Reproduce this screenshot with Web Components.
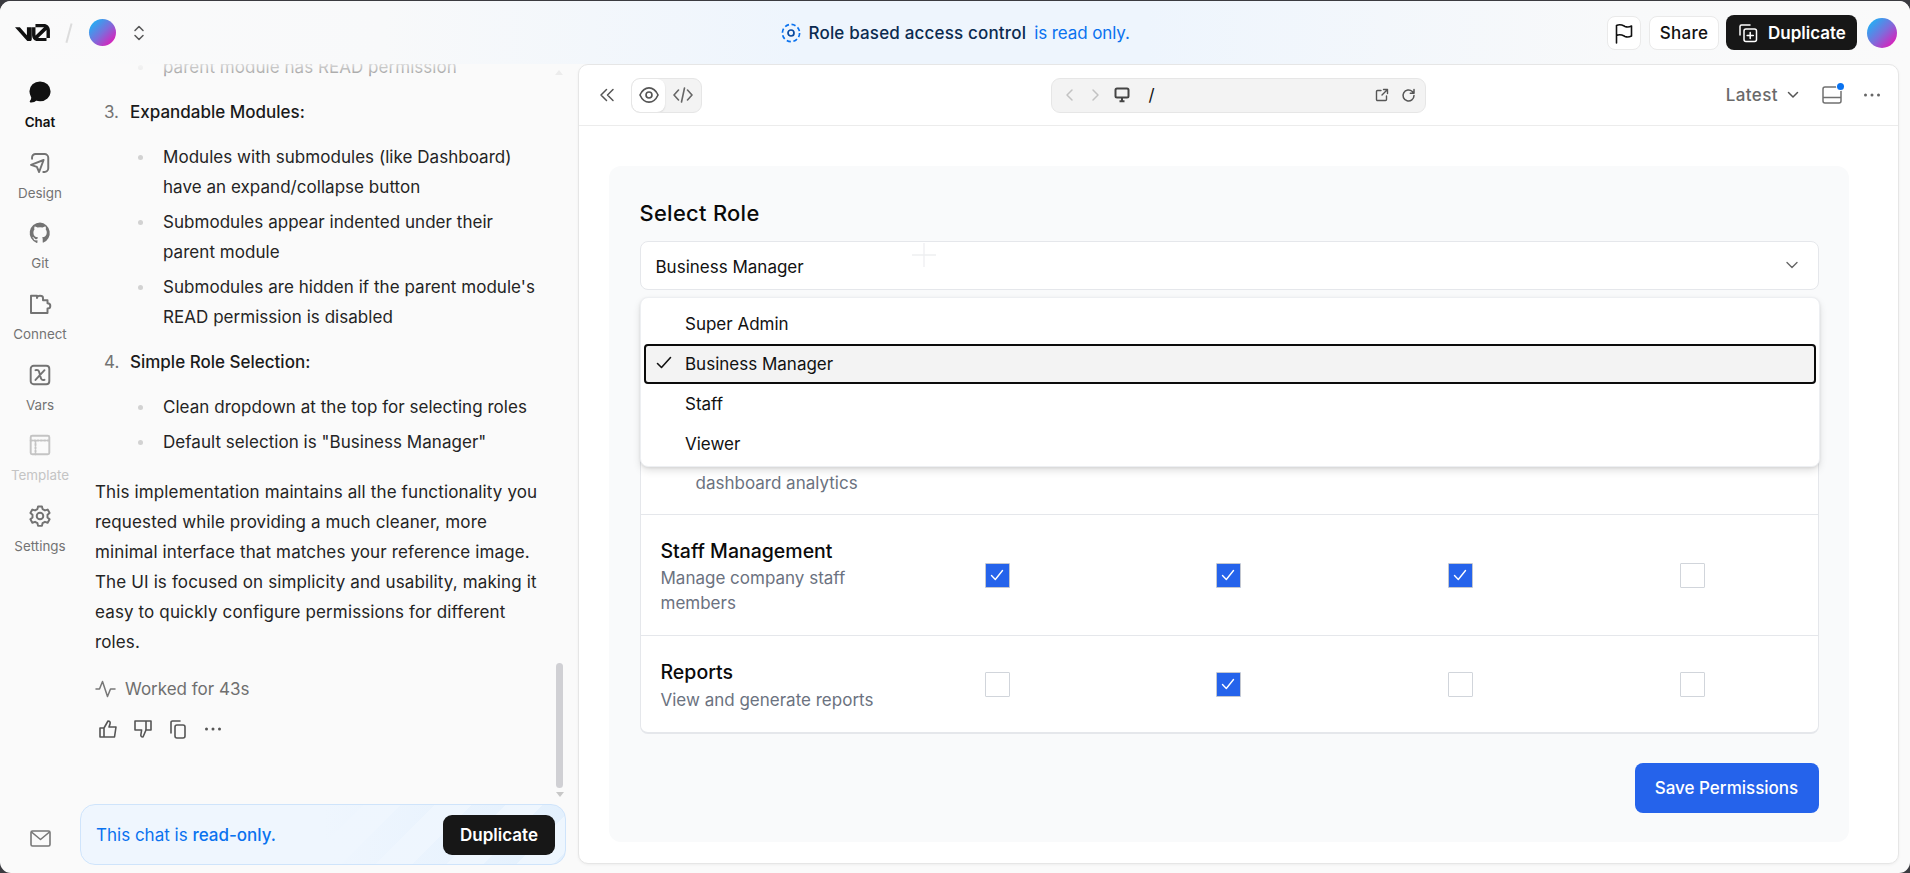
<!doctype html>
<html><head><meta charset="utf-8"><style>
html,body{margin:0;height:100%;background:#3b3b40;overflow:hidden}
body{font-family:Inter,"Liberation Sans",sans-serif;}
</style></head><body>
<v0-app></v0-app>
<script>
const ic=(d,s=24,vb=16)=>`<svg width="${s}" height="${s}" viewBox="0 0 ${vb} ${vb}" fill="none" stroke="currentColor" stroke-width="1.3" stroke-linecap="round" stroke-linejoin="round">${d}</svg>`;
const GRAD='linear-gradient(135deg,#2aa9f2 15%,#7a6fdc 50%,#e01cb8 90%)';
function def(name,html,css){customElements.define(name,class extends HTMLElement{constructor(){super();const r=this.attachShadow({mode:'open'});r.innerHTML=`<style>${css}</style>${typeof html==='function'?html(this):html}`;}})}

def('top-bar',`
<div class="l">
 <svg class="logo" width="35" height="17.5" viewBox="0 0 40 20" fill="#111"><path d="M23.39 0h9.53c3.86 0 6.99 3.13 6.99 7v9.08H36V7c0-.09 0-.19-.01-.28l-9.53 9.36h9.54v3.7h-9.44c-3.86 0-7.08-3.16-7.08-7.03V3.69h3.91v9.06c0 .17.01.35.04.52l9.74-9.57c-.08-.01-.17-.01-.25-.01h-9.53z"/><path d="M13.77 19.1 0 3.69h5.54l8.08 9.05V3.69h5.53v13.87c0 2.13-2.6 3.09-5.38 1.54z"/></svg>
 <span class="sl"></span><span class="av"></span>
 <svg width="16" height="18" viewBox="0 0 16 18" fill="none" stroke="#555" stroke-width="1.5" stroke-linecap="round" stroke-linejoin="round"><path d="M4 6.5 8 2.5l4 4M4 11.5l4 4 4-4"/></svg>
</div>
<div class="c">
 <svg width="20" height="20" viewBox="0 0 20 20" fill="none" stroke="#0a72ef" stroke-width="1.7"><circle cx="10" cy="10" r="8.6" stroke-dasharray="4.2 2.6" /><circle cx="10" cy="10" r="3" stroke="#0a4a9f"/></svg>
 <b>Role based access control</b><span>is read only.</span>
</div>
<div class="r">
 <span class="btn ic"><svg width="20" height="22" viewBox="0 0 20 22" fill="none" stroke="#111" stroke-width="1.6" stroke-linejoin="round" stroke-linecap="round"><path d="M2.5 21V3.5c4-2 6.5 0 8.5 1 2.5 1 4.5.6 6.5-.5v10c-2 1-4 1.5-6.5.5-2-1-4.5-3-8.5-1"/></svg></span>
 <span class="btn s">Share</span>
 <span class="dup"><svg width="20" height="20" viewBox="0 0 20 20" fill="none" stroke="#fff" stroke-width="1.5" stroke-linejoin="round" stroke-linecap="round"><path d="M2 12V3.5A1.5 1.5 0 0 1 3.5 2H12"/><rect x="6" y="6" width="12.5" height="12.5" rx="2"/><path d="M12.2 9.4v6.2M9.1 12.5h6.2"/></svg>Duplicate</span>
 <span class="av2"></span>
</div>`,`
:host{display:flex;align-items:center;height:63px;position:relative;background:linear-gradient(90deg,#fafafa 0,#f8f9fa 20%,#eef5fd 42%,#eef5fd 60%,#f8f9fa 85%,#fafafa 100%);color:#111;flex:none}
.l{display:flex;align-items:center;padding-left:15px;flex:none;width:515px;box-sizing:content-box}
.sl{width:1.5px;height:20px;background:#dcdcdc;transform:rotate(15deg);margin:0 19px 0 18px}
.av{width:27px;height:27px;border-radius:50%;background:${GRAD};margin-right:15px}
.c{flex:1;display:flex;align-items:center;font-size:17px;padding-left:251px;white-space:nowrap}
.c b{font-weight:500;color:#0b2b50;margin:0 8px 0 7.5px;letter-spacing:.17px}.c span{color:#0a72ef;letter-spacing:-.1px}
.r{display:flex;align-items:center;flex:none;padding-right:13px}
.btn{height:34px;box-sizing:border-box;border:1px solid #eaeaea;border-radius:8px;background:#fff;display:flex;align-items:center;font-size:17px;font-weight:500;margin-right:8px}
.btn.ic{width:34px;justify-content:center}
.btn.s{width:70px;justify-content:center;letter-spacing:.3px;margin-right:7px}
.dup{height:35px;box-sizing:border-box;width:131px;background:#171717;color:#fff;border-radius:8px;display:flex;align-items:center;gap:10px;padding-left:12px;font-size:17px;font-weight:600;margin-right:10px}
.av2{width:30px;height:30px;border-radius:50%;background:${GRAD}}
`);

const railItems=[
['Chat','on','<path d="M8 1.6c3.6 0 6.4 2.6 6.4 5.9 0 3.4-2.9 6-6.4 6-.9 0-1.8-.2-2.6-.5-.9.9-2.2 1.4-3.6 1.3.7-.7 1.1-1.8 1-2.9C2.3 10.3 1.6 9 1.6 7.5 1.6 4.2 4.4 1.6 8 1.6Z" fill="currentColor"/>'],
['Design','','<path d="M2.7 5.2V4.3A2.3 2.3 0 0 1 5 2h6a2.5 2.5 0 0 1 2.5 2.5v7A2.5 2.5 0 0 1 11 14h-.8M10.4 6 2 9.3l3.9 1.3L7.4 14z"/>'],
['Git','','<path d="M8 1a7 7 0 0 0-2.2 13.6c.3.1.5-.1.5-.3v-1.4c-2 .4-2.4-.8-2.4-.8-.3-.8-.8-1.1-.8-1.1-.6-.4 0-.4 0-.4.7 0 1.1.7 1.1.7.6 1.1 1.7.8 2.1.6 0-.4.2-.8.4-1-1.6-.2-3.1-.8-3.1-3.4 0-.8.3-1.4.7-1.9-.1-.2-.3-.9.1-1.9 0 0 .6-.2 1.9.7a6.3 6.3 0 0 1 3.5 0c1.3-.9 1.9-.7 1.9-.7.4 1 .2 1.7.1 1.9.4.5.7 1.1.7 1.9 0 2.7-1.6 3.2-3.2 3.4.3.2.5.6.5 1.3v1.9c0 .2.1.4.5.3A7 7 0 0 0 8 1Z" fill="currentColor" stroke="none"/>'],
['Connect','','<path d="M2 2.5H6V4C6 2 10 2 10 4V5.5H13V7.5C15.5 7.5 15.5 11 13 11V14H2Z"/>'],
['Vars','','<rect x="1.8" y="1.8" width="12.4" height="12.4" rx="2"/><path d="M5 4.8c1.5-.6 2.2.2 2.7 2l.6 2.3c.5 1.9 1.1 2.7 2.7 2.1M11 4.8 5 11.3"/>'],
['Template','dim','<rect x="1.8" y="1.8" width="12.4" height="12.4" rx="1"/><path d="M1.8 5h12.4M5 5v9.2" stroke-dasharray="1 1.2"/>'],
['Settings','','<path d="M6.7 1.6h2.6l.4 1.8 1.6.9 1.8-.6 1.3 2.3-1.4 1.2v1.8l1.4 1.2-1.3 2.3-1.8-.6-1.6.9-.4 1.8H6.7l-.4-1.8-1.6-.9-1.8.6-1.3-2.3 1.4-1.2V7.2L1.6 6l1.3-2.3 1.8.6 1.6-.9z"/><circle cx="8" cy="8" r="2.2"/>']];
def('nav-rail',()=>`<div class="list">${railItems.map(([t,c,d])=>`<div class="it ${c}">${ic(d)}<span>${t}</span></div>`).join('')}</div>
<div class="mail"><svg width="21" height="17" viewBox="0 0 21 17" fill="none" stroke="#777" stroke-width="1.6" stroke-linejoin="round"><rect x="1" y="1" width="19" height="15" rx="1.5"/><path d="M1.5 2l9 7.5 9-7.5"/></svg></div>`,`
:host{display:flex;flex-direction:column;width:80px;flex:none;align-items:center;color:#737373}
.list{padding-top:16px;flex:1}
.it{height:70.7px;display:flex;flex-direction:column;align-items:center;font-size:13.4px;line-height:18px;gap:9px;box-sizing:border-box;white-space:nowrap}
.it svg{flex:none}
.on{color:#111;font-weight:600}.dim{color:#c4c4c4}
.mail{padding-bottom:26px;display:flex}
`);

def('chat-pane',`
<div class="scroll">
<div class="fade"></div><div class="up"></div>
<div class="body">
 <div class="sub first"><i></i>parent module has READ permission</div>
 <div class="h h1"><em>3.</em>Expandable Modules:</div>
 <div class="sub"><i></i><span>Modules with submodules (like Dashboard)<br>have an expand/collapse button</span></div>
 <div class="sub"><i></i><span>Submodules appear indented under their<br>parent module</span></div>
 <div class="sub"><i></i><span>Submodules are hidden if the parent module's<br>READ permission is disabled</span></div>
 <div class="h"><em>4.</em>Simple Role Selection:</div>
 <div class="sub"><i></i>Clean dropdown at the top for selecting roles</div>
 <div class="sub"><i></i>Default selection is "Business Manager"</div>
 <p>This implementation maintains all the functionality you<br>requested while providing a much cleaner, more<br>minimal interface that matches your reference image.<br>The UI is focused on simplicity and usability, making it<br>easy to quickly configure permissions for different<br>roles.</p>
 <div class="worked"><svg width="21" height="18" viewBox="0 0 21 18" fill="none" stroke="#777" stroke-width="1.5" stroke-linejoin="round" stroke-linecap="round"><path d="M1 9h3.5l3-7.5 5 15 3-7.5h4.5"/></svg>Worked for 43s</div>
 <div class="acts">
  <svg width="20" height="20" viewBox="0 0 20 20" fill="none" stroke="#555" stroke-width="1.6" stroke-linejoin="round"><path d="M2 9h4v9H2zM6 9l4-7c2 0 2.5 1.5 2 3l-1 3h7l-1.5 10H6"/></svg>
  <svg width="20" height="20" viewBox="0 0 20 20" fill="none" stroke="#555" stroke-width="1.6" stroke-linejoin="round"><path d="M2 2h16v9h-5l-3 7c-2 0-2.5-1.5-2-3l.6-4H2z" /><path d="M13 2v9"/></svg>
  <svg width="20" height="20" viewBox="0 0 20 20" fill="none" stroke="#555" stroke-width="1.6" stroke-linejoin="round" stroke-linecap="round"><path d="M3 14V3.5A1.5 1.5 0 0 1 4.5 2H12"/><rect x="7" y="6" width="10" height="13" rx="2"/></svg>
  <svg width="20" height="20" viewBox="0 0 20 20" fill="#555"><circle cx="3.5" cy="10" r="1.5"/><circle cx="10" cy="10" r="1.5"/><circle cx="16.5" cy="10" r="1.5"/></svg>
 </div>
</div>
<div class="sb"><u></u><s></s></div>
</div>
<div class="ro"><span>This chat is <b>read-only.</b></span><button>Duplicate</button></div>`,`
:host{display:flex;flex-direction:column;width:486px;flex:none;margin-right:12px;height:100%;font-size:17px;color:#242424}
.scroll{flex:1;min-height:0;position:relative;overflow:hidden}
.fade{position:absolute;left:0;right:0;top:0;height:26px;background:linear-gradient(rgba(250,250,250,.85),rgba(250,250,250,.2));z-index:1}
.up{position:absolute;right:3px;top:6px;width:0;border:4px solid transparent;border-bottom:5px solid #ececec;border-top:0;z-index:2}
.body{line-height:30px;margin-top:-12px;padding-left:15px}
.sub{position:relative;padding-left:68px;margin-bottom:5px;white-space:nowrap;letter-spacing:.04px}
.sub i{position:absolute;left:43px;top:13px;width:5px;height:5px;border-radius:50%;background:#d2d2d2}
.h{padding-left:35px;margin:15px 0 15px;font-weight:500;color:#1a1a1a;position:relative;white-space:nowrap}
.h em{position:absolute;left:9px;font-style:normal;font-weight:400;color:#737373}
p{margin:20px 0 0;white-space:nowrap;letter-spacing:.13px}
.worked{display:flex;align-items:center;gap:9px;color:#6f6f6f;margin-top:17px}
.acts{display:flex;gap:15px;margin:10px 0 0 3px;height:30px;align-items:center}
.sb{position:absolute;right:3px;top:599px;width:7px}
.sb u{display:block;height:125px;border-radius:4px;background:#d0d0d4}
.sb s{display:block;width:0;margin:4px auto 0;border:4px solid transparent;border-top:5px solid #c8c8c8;border-bottom:0}
.ro{height:61px;box-sizing:border-box;flex:none;margin-bottom:8px;border:1px solid #cfe4fb;border-radius:15px;display:flex;align-items:center;justify-content:space-between;padding:0 10px 0 15px;color:#0a72ef;
background:linear-gradient(90deg,#eff6fe 50%,rgba(239,246,254,.35) 85%,rgba(239,246,254,0)),repeating-linear-gradient(135deg,#eef6fe 0 26px,#e3f0fd 26px 50px)}
.ro b{font-weight:500}
button{all:unset;background:#171717;color:#fff;font-weight:600;height:40px;width:112px;text-align:center;border-radius:9px;font-size:17px}
`);

def('preview-bar',`
<svg class="dbl" width="16" height="14" viewBox="0 0 16 14" fill="none" stroke="#555" stroke-width="1.5" stroke-linecap="round" stroke-linejoin="round"><path d="M7.5 1.5 2 7l5.5 5.5M14 1.5 8.5 7l5.5 5.5"/></svg>
<div class="seg"><span class="a"><svg width="22" height="22" viewBox="0 0 20 20" fill="none" stroke="#555" stroke-width="1.5"><path d="M10 3.5c4 0 6.700 3.200 8.200 6.500-1.500 3.300-4.200 6.500-8.200 6.500S3.300 13.300 1.800 10C3.300 6.700 6 3.500 10 3.500Z"/><circle cx="10" cy="10" r="2.700"/></svg></span><span><svg width="20" height="20" viewBox="0 0 20 20" fill="none" stroke="#666" stroke-width="1.6" stroke-linecap="round" stroke-linejoin="round"><path d="M5.500 5 1 10l4.500 5M14.500 5 19 10l-4.500 5M11.500 3l-3 14"/></svg></span></div>
<div class="url">
 <svg width="14" height="14" viewBox="0 0 14 14" fill="none" stroke="#c2c2c2" stroke-width="1.5" stroke-linecap="round" stroke-linejoin="round" style="margin-left:11px"><path d="M9 2 4 7l5 5"/></svg>
 <svg width="14" height="14" viewBox="0 0 14 14" fill="none" stroke="#c2c2c2" stroke-width="1.5" stroke-linecap="round" stroke-linejoin="round" style="margin-left:11px"><path d="m5 2 5 5-5 5"/></svg>
 <svg width="16" height="16" viewBox="0 0 16 16" fill="none" stroke="#444" stroke-width="2" stroke-linejoin="round" style="margin-left:12px"><rect x="1.5" y="1.5" width="13" height="9" rx="1.5"/><path d="M8 11v3M5.5 14.200h5"/></svg>
 <span class="path">/</span><span class="sp"></span>
 <svg width="14" height="14" viewBox="0 0 14 14" fill="none" stroke="#555" stroke-width="1.4" stroke-linecap="round" stroke-linejoin="round"><path d="M11.5 8v3.500a1 1 0 0 1-1 1h-8a1 1 0 0 1-1-1v-8a1 1 0 0 1 1-1H6M8.500 1.500h4v4M12.500 1.500 7 7"/></svg>
 <svg width="15" height="15" viewBox="0 0 15 15" fill="none" stroke="#555" stroke-width="1.5" stroke-linecap="round" stroke-linejoin="round" style="margin:0 9px 0 12px"><path d="M13 7.500a5.500 5.500 0 1 1-1.700-4L13 5.200M13 1.500v3.700H9.300"/></svg>
</div>
<div class="ver">Latest<svg width="12" height="8" viewBox="0 0 12 8" fill="none" stroke="#555" stroke-width="1.5" stroke-linecap="round" stroke-linejoin="round"><path d="m1.500 1.500 4.500 4.500 4.500-4.500"/></svg></div>
<span class="pn"><svg width="20" height="18" viewBox="0 0 20 18" fill="none" stroke="#707070" stroke-width="1.5" stroke-linejoin="round"><rect x="1" y="1" width="18" height="16" rx="2"/><path d="M1 11.500h18"/></svg><i></i></span>
<svg width="20" height="20" viewBox="0 0 20 20" fill="#666" style="margin-left:20px"><circle cx="3.5" cy="10" r="1.5"/><circle cx="10" cy="10" r="1.5"/><circle cx="16.5" cy="10" r="1.5"/></svg>`,`
:host{display:flex;align-items:center;height:60px;flex:none;border-bottom:1px solid #ececec;padding:0 16px 0 20px;box-sizing:content-box;color:#666}
.seg{display:flex;height:35px;box-sizing:border-box;width:71px;margin-left:16px;background:#f3f3f3;border:1px solid #e6e6e6;border-radius:9px;overflow:hidden}
.seg span{display:flex;align-items:center;justify-content:center}
.seg .a{background:#fff;box-shadow:0 1px 2px rgba(0,0,0,.12);border-radius:8px;width:33px;flex:none}
.seg .a+span{flex:1}
.url{margin-left:349px;width:375px;height:35px;box-sizing:border-box;background:#f3f3f3;border:1px solid #e6e6e6;border-radius:9px;display:flex;align-items:center;color:#111}
.path{margin-left:18.5px;font-size:17px}.sp{flex:1}
.ver{margin-left:auto;display:flex;align-items:center;gap:9px;font-size:17px;font-weight:500;color:#6a6a6a;letter-spacing:.4px}
.pn{position:relative;display:flex;margin-left:23px}
.pn i{position:absolute;right:-2px;top:-3px;width:7px;height:7px;border-radius:50%;background:#0a72ef;box-shadow:0 0 0 1px #fff}
`);

def('perm-row',(h)=>{
 const v=(h.getAttribute('v')||'0000').split('');
 const tick='<svg width="24" height="24" viewBox="0 0 24 24" fill="none" stroke="#fff" stroke-width="1.4" stroke-linecap="round" stroke-linejoin="round"><path d="M6.5 12.5l3.800 4L17.500 7.500"/></svg>';
 return `<div class="t"><slot></slot></div>`+v.map(x=>`<div class="cell"><span class="cb ${x==='1'?'on':''}">${x==='1'?tick:''}</span></div>`).join('');
},`
:host{display:grid;grid-template-columns:241px repeat(4,231.6px);align-items:center;border-bottom:1px solid #e5e7eb;box-sizing:border-box;position:relative}
:host([last]){border-bottom:0}
.t{padding-left:20px}
.cell{display:flex;justify-content:center}
.cb{width:25px;height:25px;box-sizing:border-box;border:1.5px solid #d1d5db;background:#fff;border-radius:1px;display:block}
.cb.on{background:#2563eb;border-color:#c3c7d0}
.cb svg{display:block;margin:-1px}
`);

def('perm-card',`
<h2>Select Role</h2>
<div class="sel"><span>Business Manager</span><svg width="14" height="9" viewBox="0 0 14 9" fill="none" stroke="#666" stroke-width="1.4" stroke-linecap="round" stroke-linejoin="round"><path d="m2 1.500 5 5 5-5"/></svg>
 <svg class="plus" width="24" height="24" viewBox="0 0 24 24" stroke="#eeeff1" stroke-width="1.3"><path d="M12 0v24M0 12h24"/></svg></div>
<div class="menu">
 <div class="o">Super Admin</div>
 <div class="o s"><svg width="18" height="18" viewBox="0 0 18 18" fill="none" stroke="#111" stroke-width="1.6" stroke-linecap="round" stroke-linejoin="round"><path d="m2.500 9.500 4 4 9-10"/></svg>Business Manager</div>
 <div class="o">Staff</div>
 <div class="o">Viewer</div>
</div>
<div class="table"><slot></slot></div>
<div class="foot"><button>Save Permissions</button></div>`,`
:host{display:block;background:#f9fafb;border-radius:12px;margin:40px 49px 0 30px;padding:30px 30.5px;position:relative;height:676px;box-sizing:border-box;color:#111}
h2{margin:0;font-size:21.9px;font-weight:500;line-height:34px;color:#0a0a0a;letter-spacing:.3px}
.sel{margin-top:11px;height:49px;box-sizing:border-box;border:1px solid #e5e7eb;border-radius:8px;background:#fff;display:flex;align-items:center;justify-content:space-between;padding:0 19px 0 15px;font-size:17px;position:relative}
.sel span{padding-top:2px}
.plus{position:absolute;left:271px;top:1px}
.menu{position:absolute;z-index:2;left:30.5px;right:29px;top:131px;height:170px;box-sizing:border-box;background:#fff;border:1px solid #edeff2;border-radius:8px;box-shadow:0 4px 8px -1px rgba(0,0,0,.14),0 1px 3px rgba(0,0,0,.08);padding:6px 3px 4px 3.5px;font-size:17px}
.o{height:40px;display:flex;align-items:center;padding-left:41px;position:relative;box-sizing:border-box}
.o.s{background:#f3f3f3;outline:2px solid #0b0b0b;outline-offset:-2px;border-radius:4px}
.o svg{position:absolute;left:11px;top:10px}
.table{margin-top:32px;background:#fff;border:1px solid #e5e7eb;border-bottom-width:2px;border-radius:8px;overflow:hidden}
.foot{display:flex;justify-content:flex-end;margin-top:29px}
button{all:unset;background:#2563eb;color:#fff;font-size:17px;font-weight:500;height:50px;width:184px;text-align:center;border-radius:8px}
`);

def('module-info',`<slot name="title"></slot><slot></slot>`,`
:host{display:block;color:#6b7280;font-size:17px;line-height:25px;padding-top:2px}
::slotted([slot=title]){display:block;color:#0a0a0a;font-size:19.5px;font-weight:500;line-height:30px;margin-bottom:.5px}
`);

def('preview-pane',`<preview-bar></preview-bar>
<perm-card>
 <perm-row v="0000" style="height:192px"><module-info style="padding:130px 0 0 35px">dashboard analytics</module-info></perm-row>
 <perm-row v="1110" style="height:121px"><module-info><span slot="title">Staff Management</span>Manage company staff<br>members</module-info></perm-row>
 <perm-row v="0100" last style="height:96px"><module-info><span slot="title">Reports</span>View and generate reports</module-info></perm-row>
</perm-card>`,`
:host{display:block;width:1321px;flex:none;background:#fff;border:1px solid #e6e6e6;border-radius:10px;box-sizing:border-box;height:800px;overflow:hidden;box-shadow:0 1px 3px rgba(0,0,0,.05)}
`);

def('v0-app',`<top-bar></top-bar><div class="main"><nav-rail></nav-rail><chat-pane></chat-pane><preview-pane></preview-pane></div>`,`
:host{display:flex;flex-direction:column;height:872px;margin-top:1px;background:#fafafa;border-radius:11px;overflow:hidden}
.main{flex:1;display:flex;min-height:0}
`);
</script></body></html>
